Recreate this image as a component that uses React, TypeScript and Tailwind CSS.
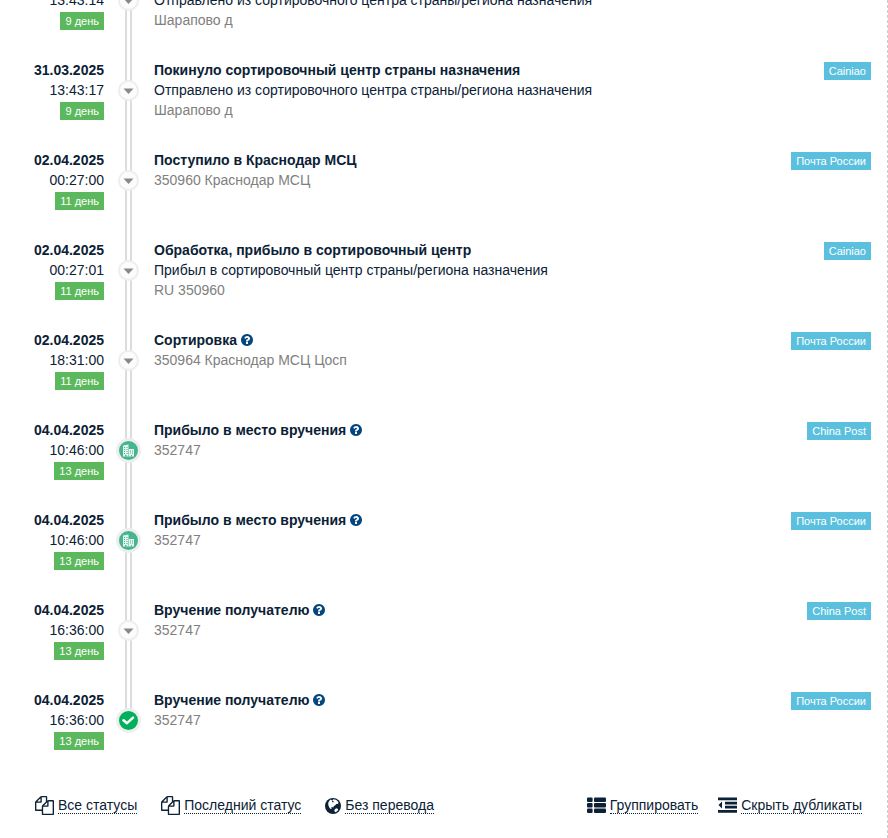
import { ReactNode } from 'react';

interface TrackingEvent {
  id: number;
  date: string;
  time: string;
  day: string;
  title: string;
  details?: string;
  place: string;
  service: string;
  help?: boolean;
  marker: 'arrow' | 'office' | 'done';
}

const DEPARTED = 'Отправлено из сортировочного центра страны/региона назначения';

const events: TrackingEvent[] = [
  { id: 1, date: '31.03.2025', time: '13:43:14', day: '9 день', title: 'Покинуло сортировочный центр страны назначения', details: DEPARTED, place: 'Шарапово д', service: 'Cainiao', marker: 'arrow' },
  { id: 2, date: '31.03.2025', time: '13:43:17', day: '9 день', title: 'Покинуло сортировочный центр страны назначения', details: DEPARTED, place: 'Шарапово д', service: 'Cainiao', marker: 'arrow' },
  { id: 3, date: '02.04.2025', time: '00:27:00', day: '11 день', title: 'Поступило в Краснодар МСЦ', place: '350960 Краснодар МСЦ', service: 'Почта России', marker: 'arrow' },
  { id: 4, date: '02.04.2025', time: '00:27:01', day: '11 день', title: 'Обработка, прибыло в сортировочный центр', details: 'Прибыл в сортировочный центр страны/региона назначения', place: 'RU 350960', service: 'Cainiao', marker: 'arrow' },
  { id: 5, date: '02.04.2025', time: '18:31:00', day: '11 день', title: 'Сортировка', place: '350964 Краснодар МСЦ Цосп', service: 'Почта России', help: true, marker: 'arrow' },
  { id: 6, date: '04.04.2025', time: '10:46:00', day: '13 день', title: 'Прибыло в место вручения', place: '352747', service: 'China Post', help: true, marker: 'office' },
  { id: 7, date: '04.04.2025', time: '10:46:00', day: '13 день', title: 'Прибыло в место вручения', place: '352747', service: 'Почта России', help: true, marker: 'office' },
  { id: 8, date: '04.04.2025', time: '16:36:00', day: '13 день', title: 'Вручение получателю', place: '352747', service: 'China Post', help: true, marker: 'arrow' },
  { id: 9, date: '04.04.2025', time: '16:36:00', day: '13 день', title: 'Вручение получателю', place: '352747', service: 'Почта России', help: true, marker: 'done' },
];

function HelpIcon() {
  return (
    <svg viewBox="0 0 1792 1792" className="h-[14px] w-[14px] fill-[#04477f]" aria-hidden="true">
      <path d="M1024 1376v-192q0-14-9-23t-23-9h-192q-14 0-23 9t-9 23v192q0 14 9 23t23 9h192q14 0 23-9t9-23zm256-672q0-88-55.5-163t-138.5-116-170-41q-243 0-371 213-15 24 8 42l132 100q7 6 19 6 16 0 25-12 53-68 86-92 34-24 86-24 48 0 85.500 26t37.500 59q0 38-20 61t-68 45q-63 28-115.500 86.500t-52.500 125.500v36q0 14 9 23t23 9h192q14 0 23-9t9-23q0-19 21.500-49.500t54.500-49.500q32-18 49-28.500t46-35 44.500-48 28-60.500 12.500-81zm384 192q0 209-103 385.500t-279.500 279.500-385.500 103-385.500-103-279.500-279.500-103-385.500 103-385.500 279.500-279.500 385.500-103 385.500 103 279.500 279.500 103 385.500z" />
    </svg>
  );
}

function CopyIcon() {
  return (
    <svg viewBox="0 0 1792 1792" className="h-[19px] w-[19px] fill-current" aria-hidden="true">
      <path d="M1696 384q40 0 68 28t28 68v1216q0 40-28 68t-68 28h-960q-40 0-68-28t-28-68v-288h-544q-40 0-68-28t-28-68v-672q0-40 20-88t48-76l408-408q28-28 76-48t88-20h416q40 0 68 28t28 68v328q68-40 128-40h416zm-544 213l-299 299h299v-299zm-640-384l-299 299h299v-299zm196 647l316-316v-416h-384v416q0 40-28 68t-68 28h-416v640h512v-256q0-40 20-88t48-76zm956 804v-1152h-384v416q0 40-28 68t-68 28h-416v640h896z" />
    </svg>
  );
}

function GlobeIcon() {
  return (
    <svg viewBox="0 0 16 16" className="h-4 w-4" aria-hidden="true">
      <circle cx="8" cy="8" r="8" fill="#0b2135" />
      <path fill="#fff" d="M4.200 3 5.500 1.600 7.200 2.400 8.300 1.200l2.700.6 1.900 1.700.7 1.400-1 1.200-1.500-.1-.7 1.200-1.600.8-.4 1.500-1.400-.5-.8.8.5 1.200-1.500-.2-1-1.600L3.400 7.500 3.200 5z" />
      <path fill="#0b2135" d="m7 2.600 1.200.4.700 1-1 .5-.8-.7z" />
      <path fill="#fff" d="m9.800 11.200 1.600-.9 1.600.6.200 1-1.400 1.500-1.700.8-.7-1.500z" />
    </svg>
  );
}

function ListIcon() {
  return (
    <svg viewBox="0 0 19 19" className="h-[19px] w-[19px] fill-current" aria-hidden="true">
      <rect x="0" y="1.500" width="5.600" height="4.400" rx="1" />
      <rect x="7" y="1.500" width="12" height="4.400" rx="1" />
      <rect x="0" y="7" width="5.600" height="4.400" rx="1" />
      <rect x="7" y="7" width="12" height="4.400" rx="1" />
      <rect x="0" y="12.500" width="5.600" height="4.400" rx="1" />
      <rect x="7" y="12.500" width="12" height="4.400" rx="1" />
    </svg>
  );
}

function OutdentIcon() {
  return (
    <svg viewBox="0 0 19 19" className="h-[19px] w-[19px] fill-current" aria-hidden="true">
      <path d="M0 1.500h19v2.700H0zM7 5.700h12v2.700H7zM7 9.800h12v2.700H7zM0 14h19v2.700H0zM4 5.500v7L.5 9z" />
    </svg>
  );
}

function Marker({ type }: { type: TrackingEvent['marker'] }) {
  if (type === 'arrow') {
    return (
      <span className="flex h-[21px] w-[21px] items-center justify-center rounded-full border-2 border-[#eee] bg-[#fcfcfc]">
        <svg viewBox="0 0 11 7" className="h-[7px] w-[11px] fill-[#8a8a82]" aria-hidden="true">
          <path d="M0.500 1.500h10L5.500 7z" />
        </svg>
      </span>
    );
  }
  if (type === 'office') {
    return (
      <span className="flex h-[25px] w-[25px] items-center justify-center rounded-full border-[3px] border-[#eee] bg-[#46b48c]">
        <svg viewBox="0 0 13 13" className="h-[13px] w-[13px]" aria-hidden="true">
          <path fill="#e4f5ee" d="M1 1.500 6.500.5V5H12v7.500H1z" />
          <path fill="#46b48c" d="M2 3h1v1H2zM4.500 3h1v1h-1zM2 5h1v1H2zM4.500 5h1v1h-1zM2 7h1v1H2zM4.500 7h1v1h-1zM2 9h1v1H2zM4.500 9h1v1h-1zM3 11h1.500v1.500H3zM6.500 5H7v7.500h-.5zM8 6.500h1v1H8zM10 6.500h1v1h-1zM8 8.500h1v1H8zM10 8.500h1v1h-1zM9 11h1v1.500H9z" />
        </svg>
      </span>
    );
  }
  return (
    <span className="flex h-[25px] w-[25px] items-center justify-center rounded-full border-[3px] border-[#eee] bg-[#00b05a]">
      <svg viewBox="0 0 13 13" className="h-[13px] w-[13px]" aria-hidden="true">
        <path fill="none" stroke="#fff" strokeWidth="2.500" strokeLinecap="round" strokeLinejoin="round" d="M1.500 6.200 5 9.200l6-5.500" />
      </svg>
    </span>
  );
}

function EventRow({ event, last }: { event: TrackingEvent; last: boolean }) {
  return (
    <li className="flex h-[90px]">
      <div className="w-[104px] shrink-0 text-right">
        <div className="font-bold">{event.date}</div>
        <div>{event.time}</div>
        <div className="flex justify-end pt-[2px]">
          <span className="bg-[#5cb85c] px-[5px] text-[11px] leading-[18px] text-white">{event.day}</span>
        </div>
      </div>
      <div className="relative flex w-[49px] shrink-0 justify-center">
        <span className={`w-[7px] border-x-2 border-[#d8dde0] ${last ? 'h-5' : 'h-full'}`} />
        <span className="absolute inset-x-0 top-[18px] flex h-[25px] items-center justify-center">
          <Marker type={event.marker} />
        </span>
      </div>
      <div className="min-w-0 flex-1 pl-px">
        <div className="flex items-center gap-[3px] font-bold">
          {event.title}
          {event.help && (
            <button type="button" aria-label="Подробнее">
              <HelpIcon />
            </button>
          )}
        </div>
        {event.details && <div>{event.details}</div>}
        <div className="text-[#808080]">{event.place}</div>
      </div>
      <div className="shrink-0 pt-[2px]">
        <span className="block bg-[#5bc0de] px-[5px] text-[11px] leading-[18px] text-white">{event.service}</span>
      </div>
    </li>
  );
}

function Action({ icon, children }: { icon: ReactNode; children: ReactNode }) {
  return (
    <button type="button" className="flex items-center gap-1">
      {icon}
      <span className="border-b border-dotted border-[#0b2135] leading-4">{children}</span>
    </button>
  );
}

export default function App() {
  return (
    <div className="min-h-screen overflow-hidden border-r border-dashed border-[#ccc] bg-white pr-4 font-['Liberation_Sans',Arial,sans-serif] text-[14px] leading-5 text-[#0b2135]">
      <ul className="-mt-[30px]">
        {events.map((event, index) => (
          <EventRow key={event.id} event={event} last={index === events.length - 1} />
        ))}
      </ul>
      <div className="flex items-center justify-between pt-4 pr-[9px] pb-5 pl-[35px]">
        <div className="flex gap-6">
          <Action icon={<CopyIcon />}>Все статусы</Action>
          <Action icon={<CopyIcon />}>Последний статус</Action>
          <Action icon={<GlobeIcon />}>Без перевода</Action>
        </div>
        <div className="flex gap-5">
          <Action icon={<ListIcon />}>Группировать</Action>
          <Action icon={<OutdentIcon />}>Скрыть дубликаты</Action>
        </div>
      </div>
    </div>
  );
}
